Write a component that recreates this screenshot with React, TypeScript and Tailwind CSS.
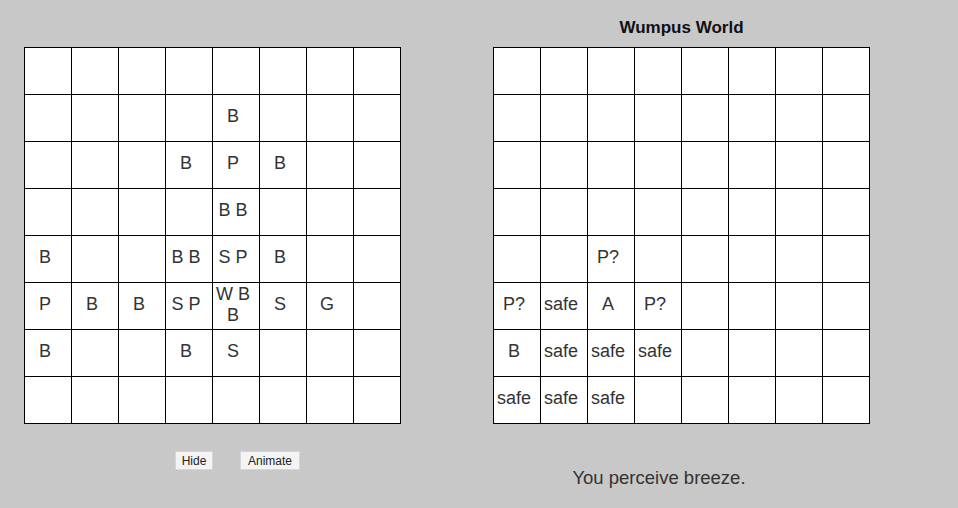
const leftBoard: string[][] = [
  ['', '', '', '', '', '', '', ''],
  ['', '', '', '', 'B', '', '', ''],
  ['', '', '', 'B', 'P', 'B', '', ''],
  ['', '', '', '', 'B B', '', '', ''],
  ['B', '', '', 'B B', 'S P', 'B', '', ''],
  ['P', 'B', 'B', 'S P', 'W B B', 'S', 'G', ''],
  ['B', '', '', 'B', 'S', '', '', ''],
  ['', '', '', '', '', '', '', ''],
]

const agentBoard: string[][] = [
  ['', '', '', '', '', '', '', ''],
  ['', '', '', '', '', '', '', ''],
  ['', '', '', '', '', '', '', ''],
  ['', '', '', '', '', '', '', ''],
  ['', '', 'P?', '', '', '', '', ''],
  ['P?', 'safe', 'A', 'P?', '', '', '', ''],
  ['B', 'safe', 'safe', 'safe', '', '', '', ''],
  ['safe', 'safe', 'safe', '', '', '', '', ''],
]

function Board({ cells }: { cells: string[][] }) {
  return (
    <div className="grid grid-cols-[repeat(8,46px)] grid-rows-[repeat(8,46px)] gap-px bg-black p-px w-fit">
      {cells.flat().map((text, i) => (
        <div
          key={i}
          className="bg-white flex items-center justify-center text-center pr-[6px] pb-[3px] text-[18px] leading-[21px] text-[#333]"
        >
          {text}
        </div>
      ))}
    </div>
  )
}

export default function App() {
  return (
    <div
      className="w-[958px] h-[508px] bg-[#c8c8c8] flex pl-[24px] overflow-hidden"
      style={{ fontFamily: '"Liberation Sans", Arial, sans-serif' }}
    >
      <div className="flex flex-col pt-[47px]">
        <Board cells={leftBoard} />
        <div className="flex gap-[27px] pl-[151px] mt-[27px]">
          <button className="w-[38px] h-[19px] bg-[#f4f4f4] border border-[#d6d6d6] text-[12px] leading-none text-[#222]">
            Hide
          </button>
          <button className="w-[60px] h-[19px] bg-[#f4f4f4] border border-[#d6d6d6] text-[12px] leading-none text-[#222]">
            Animate
          </button>
        </div>
      </div>

      <div className="flex flex-col ml-[92px] pt-[18px]">
        <h1 className="text-center text-[17px] leading-[20px] font-bold text-[#111] mb-[9px]">
          Wumpus World
        </h1>
        <Board cells={agentBoard} />
        <p className="text-center pr-[45px] mt-[43px] text-[18.5px] leading-[21px] text-[#333]">
          You perceive breeze.
        </p>
      </div>
    </div>
  )
}
